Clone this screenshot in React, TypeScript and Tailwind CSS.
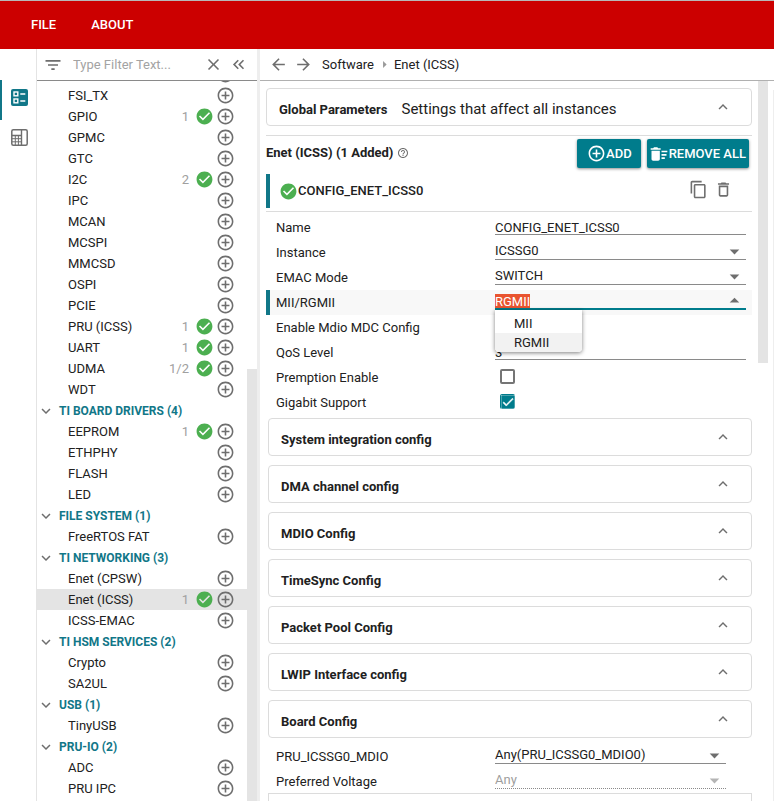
import { useEffect, useRef } from "react";
import type { ReactNode } from "react";
import {
  MdAddCircleOutline,
  MdArrowBack,
  MdArrowDropDown,
  MdArrowDropUp,
  MdArrowForward,
  MdArrowRight,
  MdCheck,
  MdCheckCircle,
  MdClose,
  MdContentCopy,
  MdDeleteOutline,
  MdDeleteSweep,
  MdFilterList,
  MdHelpOutline,
  MdKeyboardArrowDown,
  MdKeyboardArrowUp,
  MdKeyboardDoubleArrowLeft,
} from "react-icons/md";

type Module = { name: string; count?: string; selected?: boolean };
type Group = { title?: string; modules: Module[] };

const groups: Group[] = [
  {
    modules: [
      { name: "" },
      { name: "FSI_TX" },
      { name: "GPIO", count: "1" },
      { name: "GPMC" },
      { name: "GTC" },
      { name: "I2C", count: "2" },
      { name: "IPC" },
      { name: "MCAN" },
      { name: "MCSPI" },
      { name: "MMCSD" },
      { name: "OSPI" },
      { name: "PCIE" },
      { name: "PRU (ICSS)", count: "1" },
      { name: "UART", count: "1" },
      { name: "UDMA", count: "1/2" },
      { name: "WDT" },
    ],
  },
  {
    title: "TI BOARD DRIVERS (4)",
    modules: [{ name: "EEPROM", count: "1" }, { name: "ETHPHY" }, { name: "FLASH" }, { name: "LED" }],
  },
  { title: "FILE SYSTEM (1)", modules: [{ name: "FreeRTOS FAT" }] },
  {
    title: "TI NETWORKING (3)",
    modules: [{ name: "Enet (CPSW)" }, { name: "Enet (ICSS)", count: "1", selected: true }, { name: "ICSS-EMAC" }],
  },
  { title: "TI HSM SERVICES (2)", modules: [{ name: "Crypto" }, { name: "SA2UL" }] },
  { title: "USB (1)", modules: [{ name: "TinyUSB" }] },
  { title: "PRU-IO (2)", modules: [{ name: "ADC" }, { name: "PRU IPC" }] },
];

const sections = [
  "System integration config",
  "DMA channel config",
  "MDIO Config",
  "TimeSync Config",
  "Packet Pool Config",
  "LWIP Interface config",
  "Board Config",
];

function ModuleRow({ name, count, selected }: Module) {
  return (
    <li className={`flex h-[21px] items-center pl-[31px] pr-3 ${selected ? "bg-[#e4e4e4]" : ""}`}>
      <span className="flex-1 whitespace-nowrap">{name}</span>
      {count && (
        <>
          <span className="mr-[6px] text-[#a0a0a0]">{count}</span>
          <MdCheckCircle className="mr-[2px] size-[19px] text-[#4caf50]" />
        </>
      )}
      <button type="button" aria-label="Add" className="text-[#6e6e6e]">
        <MdAddCircleOutline className="size-[19px]" />
      </button>
    </li>
  );
}

function Sidebar() {
  return (
    <aside className="flex w-[221px] shrink-0 flex-col border-l border-[#e4e4e4]">
      <div className="flex h-8 shrink-0 items-center border-b border-[#8a8a8a] pl-[6px] pr-[9px] text-[#6e6e6e]">
        <MdFilterList className="size-5 shrink-0" />
        <input
          aria-label="Filter"
          placeholder="Type Filter Text..."
          className="ml-[10px] w-0 flex-1 outline-none placeholder:text-[#a3a3a3]"
        />
        <button type="button" aria-label="Clear filter">
          <MdClose className="size-[19px]" />
        </button>
        <button type="button" aria-label="Collapse panel" className="ml-[6px]">
          <MdKeyboardDoubleArrowLeft className="size-[19px]" />
        </button>
      </div>
      <div className="flex min-h-0 flex-1 overflow-hidden">
        <div className="-mt-[17px] flex-1">
          {groups.map((group, i) => (
            <section key={i}>
              {group.title && (
                <h2 className="flex h-[21px] items-center text-xs font-bold text-[#117788]">
                  <MdKeyboardArrowDown className="mr-1 size-[18px] text-[#6e6e6e]" />
                  {group.title}
                </h2>
              )}
              <ul>
                {group.modules.map((m, k) => (
                  <ModuleRow key={k} {...m} />
                ))}
              </ul>
            </section>
          ))}
        </div>
        <div className="flex w-[10px] flex-col justify-end">
          <div className="h-3/5 bg-[#e4e4e4]" />
        </div>
      </div>
    </aside>
  );
}

function Rail() {
  return (
    <nav className="flex w-9 shrink-0 flex-col pt-[31px]">
      <button
        type="button"
        aria-label="Modules"
        className="flex h-10 items-start border-l-2 border-[#117788] pl-[9px] pt-[9px] text-[#117788]"
      >
        <svg viewBox="0 0 17 17" className="size-[17px]">
          <rect width="17" height="17" rx="2" fill="currentColor" />
          <g fill="none" stroke="#fff" strokeWidth="1.4">
            <rect x="3" y="3" width="3.8" height="3.8" />
            <rect x="3" y="10" width="3.8" height="3.8" />
            <path d="M9.3 5h5M9.3 12h5" />
          </g>
        </svg>
      </button>
      <button
        type="button"
        aria-label="Device"
        className="flex h-10 items-start pl-[11px] pt-[9px] text-[#6e6e6e]"
      >
        <svg viewBox="0 0 17 17" className="size-[17px]" fill="none" stroke="currentColor">
          <rect x=".8" y=".8" width="15.4" height="15.4" rx="1.5" strokeWidth="1.5" />
          <path d="M10.5 1v15M1 6.5h9.5" strokeWidth="1.4" />
          <path d="M4.3 7v9M7.4 7v9M1 9.7h9.5M1 12.8h9.5" />
        </svg>
      </button>
    </nav>
  );
}

function Accordion({ title, note }: { title: string; note?: string }) {
  return (
    <button
      type="button"
      className="flex h-[38px] w-full items-center rounded border border-[#dcdcdc] pl-3 pr-[19px] text-left"
    >
      <span className="mt-[5px] flex flex-1 items-baseline gap-[14px]">
        <span className="font-bold">{title}</span>
        {note && <span className="text-[15px] leading-5">{note}</span>}
      </span>
      <MdKeyboardArrowUp className="size-[18px] text-[#6e6e6e]" />
    </button>
  );
}

function Field({ id, label, active, children }: { id: string; label: string; active?: boolean; children?: ReactNode }) {
  return (
    <div
      className={`flex h-[25px] items-start border-l-4 pl-[6px] pr-[6px] ${
        active ? "border-[#117788] bg-[#f8f8f8]" : "border-transparent"
      }`}
    >
      <label htmlFor={id} className="w-[219px] shrink-0 leading-[25px]">
        {label}
      </label>
      {children}
    </div>
  );
}

function Dropdown({ id, value, disabled }: { id: string; value: string; disabled?: boolean }) {
  return (
    <div
      className={`grid h-5 flex-1 grid-rows-[19px] items-start border-b ${
        disabled ? "border-dotted border-[#8a8a8a] text-[#9e9e9e]" : "border-[#8a8a8a]"
      }`}
    >
      <select
        id={id}
        disabled={disabled}
        defaultValue={value}
        className="col-start-1 row-start-1 h-[19px] w-full appearance-none bg-transparent pt-px opacity-100 outline-none"
      >
        <option>{value}</option>
      </select>
      <MdArrowDropDown
        className={`pointer-events-none col-start-1 row-start-1 size-[23px] justify-self-end ${
          disabled ? "text-[#b4b4b4]" : "text-[#6e6e6e]"
        }`}
      />
    </div>
  );
}

function ModeCombo({ id }: { id: string }) {
  const ref = useRef<HTMLInputElement>(null);
  useEffect(() => {
    ref.current?.focus();
    ref.current?.select();
  }, []);
  return (
    <div className="relative flex h-5 flex-1 items-center border-b-2 border-[#007c8c]">
      <input
        ref={ref}
        id={id}
        role="combobox"
        aria-expanded="true"
        aria-controls="mode-options"
        defaultValue="RGMII"
        className="h-[18px] w-0 flex-1 bg-transparent pt-1 leading-[14px] outline-none selection:bg-[#e95430] selection:text-white"
      />
      <MdArrowDropUp className="mt-[3px] size-[23px] text-[#6e6e6e]" />
      <ul
        id="mode-options"
        role="listbox"
        className="absolute left-0 top-5 z-10 w-[87px] rounded-b bg-white pt-1 shadow-[0_1px_4px_rgba(0,0,0,0.5)]"
      >
        <li role="option" aria-selected="false" className="h-[19px] pl-[19px] leading-[19px]">
          MII
        </li>
        <li role="option" aria-selected="true" className="h-[19px] rounded-b bg-[#f2f2f2] pl-[19px] leading-[19px]">
          RGMII
        </li>
      </ul>
    </div>
  );
}

function Tick({ id, checked }: { id: string; checked?: boolean }) {
  return (
    <span className="ml-[5px] mt-1 grid size-[15px] place-items-center">
      <input
        id={id}
        type="checkbox"
        defaultChecked={checked}
        className="col-start-1 row-start-1 size-[15px] appearance-none rounded-xs border-2 border-[#757575] checked:border-[#007c8c] checked:bg-[#007c8c]"
      />
      {checked && (
        <MdCheck className="pointer-events-none col-start-1 row-start-1 size-[14px] stroke-white stroke-1 text-white" />
      )}
    </span>
  );
}

function ActionButton({ children }: { children: ReactNode }) {
  return (
    <button
      type="button"
      className="mt-[2px] flex h-[29px] items-center rounded-xs bg-[#007c8c] font-medium text-white shadow-[0_1px_3px_rgba(0,0,0,0.45)]"
    >
      {children}
    </button>
  );
}

function Content() {
  return (
    <main className="flex min-w-0 flex-1 flex-col">
      <div className="flex h-8 shrink-0 items-center border-b border-[#b0b0b0] pl-[9px]">
        <button type="button" aria-label="Back" className="text-[#6e6e6e]">
          <MdArrowBack className="size-[19px]" />
        </button>
        <button type="button" aria-label="Forward" className="ml-[6px] text-[#6e6e6e]">
          <MdArrowForward className="size-[19px]" />
        </button>
        <a href="#software" className="ml-[9px]">
          Software
        </a>
        <MdArrowRight className="ml-[2px] mr-px size-[17px] text-[#9a9a9a]" />
        <span>Enet (ICSS)</span>
      </div>
      <div className="flex min-h-0 flex-1 overflow-hidden">
        <div className="flex-1 pl-[6px] pr-[6px] pt-[7px]">
          <Accordion title="Global Parameters" note="Settings that affect all instances" />
          <div className="mt-[9px] flex h-[34px] items-center gap-[6px] border-t border-[#dcdcdc] pr-[3px]">
            <h1 className="flex flex-1 items-center gap-1 font-bold">
              Enet (ICSS) (1 Added)
              <MdHelpOutline className="size-3 text-[#6e6e6e]" />
            </h1>
            <ActionButton>
              <MdAddCircleOutline className="ml-[10px] size-[19px]" />
              <span className="pr-[9px]">ADD</span>
            </ActionButton>
            <ActionButton>
              <MdDeleteSweep className="ml-[2px] size-5" />
              <span className="pr-[3px]">REMOVE ALL</span>
            </ActionButton>
          </div>
          <div className="mt-[5px] flex h-[34px] items-center border-l-4 border-[#117788] pl-[9px] pr-[19px]">
            <MdCheckCircle className="size-[19px] text-[#4caf50]" />
            <span className="flex-1 font-medium">CONFIG_ENET_ICSS0</span>
            <div className="mb-[3px] flex gap-[6px] text-[#6e6e6e]">
              <button type="button" aria-label="Duplicate">
                <MdContentCopy className="size-[19px]" />
              </button>
              <button type="button" aria-label="Delete">
                <MdDeleteOutline className="size-[19px]" />
              </button>
            </div>
          </div>
          <div className="mt-[3px] border-t border-[#dcdcdc] pt-[3px]">
            <Field id="name" label="Name">
              <input
                id="name"
                defaultValue="CONFIG_ENET_ICSS0"
                className="h-5 w-0 flex-1 border-b border-[#8a8a8a] pt-[5px] outline-none"
              />
            </Field>
            <Field id="instance" label="Instance">
              <Dropdown id="instance" value="ICSSG0" />
            </Field>
            <Field id="emac" label="EMAC Mode">
              <Dropdown id="emac" value="SWITCH" />
            </Field>
            <Field id="mode" label="MII/RGMII" active>
              <ModeCombo id="mode" />
            </Field>
            <Field id="mdc" label="Enable Mdio MDC Config">
              <Tick id="mdc" checked />
            </Field>
            <Field id="qos" label="QoS Level">
              <input
                id="qos"
                defaultValue="3"
                className="h-5 w-0 flex-1 border-b border-[#8a8a8a] pt-[5px] outline-none"
              />
            </Field>
            <Field id="premption" label="Premption Enable">
              <Tick id="premption" />
            </Field>
            <Field id="gigabit" label="Gigabit Support">
              <Tick id="gigabit" checked />
            </Field>
          </div>
          <div className="mt-[3px] flex flex-col gap-[9px] pl-[2px]">
            {sections.map((s) => (
              <Accordion key={s} title={s} />
            ))}
          </div>
          <div className="mt-[6px] h-[49px] pr-5">
            <Field id="mdio" label="PRU_ICSSG0_MDIO">
              <Dropdown id="mdio" value="Any(PRU_ICSSG0_MDIO0)" />
            </Field>
            <Field id="voltage" label="Preferred Voltage">
              <Dropdown id="voltage" value="Any" disabled />
            </Field>
          </div>
          <div className="ml-[2px] h-[38px] border border-[#dcdcdc]" />
        </div>
        <div className="w-[10px]">
          <div className="h-[282px] bg-[#e4e4e4]" />
        </div>
        <div className="ml-[5px] mt-[9px] w-px bg-[#eeeeee]" />
      </div>
    </main>
  );
}

export default function App() {
  return (
    <div className="flex h-screen flex-col overflow-hidden bg-white font-['Roboto',sans-serif] text-[13px] text-[#212121]">
      <header className="flex h-[49px] shrink-0 items-center gap-[35px] border-t border-[#b8b8b8] bg-[#cc0000] pl-[31px] font-medium text-white">
        <button type="button">FILE</button>
        <button type="button">ABOUT</button>
      </header>
      <div className="flex min-h-0 flex-1">
        <Rail />
        <Sidebar />
        <div className="w-[3px] shrink-0 bg-[#eeeeee]" />
        <Content />
      </div>
    </div>
  );
}
